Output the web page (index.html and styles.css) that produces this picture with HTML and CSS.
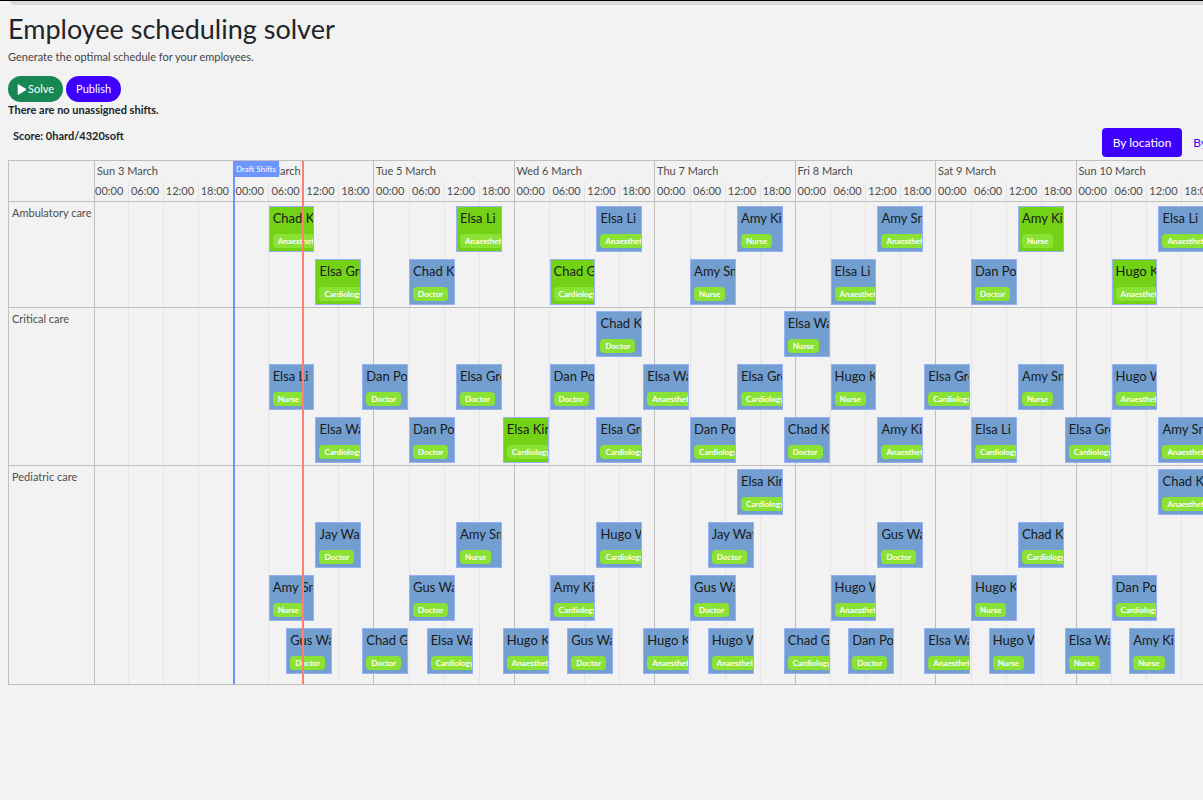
FILE: index.html
```html
<!DOCTYPE html>
<html lang="en">
<head>
<meta charset="utf-8">
<title>Employee scheduling solver</title>
<link rel="stylesheet" href="styles.css">
</head>
<body>
<div class="topbar"><div class="topbar-inner"></div></div>
<main class="page">
  <h1 class="title">Employee scheduling solver</h1>
  <p class="lead">Generate the optimal schedule for your employees.</p>
  <div class="actions">
    <button type="button" class="pill pill-solve"><svg class="play" viewBox="0 0 10 12" aria-hidden="true"><path d="M0.3 1.2Q0.3 0 1.4 0.6L9.2 5.2Q10 6 9.2 6.7L1.4 11.4Q0.3 12 0.3 10.8Z" fill="#fff"/></svg>Solve</button>
    <button type="button" class="pill pill-publish">Publish</button>
  </div>
  <p class="unassigned">There are no unassigned shifts.</p>
  <div class="toolbar">
    <span class="score">Score: 0hard/4320soft</span>
    <div class="tabs">
      <button type="button" class="tab tab-active">By location</button>
      <button type="button" class="tab">By employee</button>
    </div>
  </div>
  <section class="timeline" id="timeline">
    <div class="axis"><div class="days" id="days"></div></div>
    <div class="corner"></div>
  </section>
</main>
<script src="timeline.js"></script>
</body>
</html>
```
FILE: styles.css
```css
* { box-sizing: border-box; }

body {
  margin: 0;
  overflow-x: hidden;
  background: #f2f2f2;
  color: #212529;
  font: 11px/16px Lato, "Noto Sans", sans-serif;
}

button { font: inherit; border: 0; cursor: pointer; }

.topbar { border-top: 1px solid #000; }
.topbar-inner {
  height: 4px;
  margin-left: 10px;
  background: #dcd8dc;
  border-bottom-left-radius: 6px;
}

.page { margin: 0 -69px 0 8px; }

.title {
  margin: 8px 0 0;
  font-size: 27px;
  line-height: 32px;
  font-weight: 400;
}
.lead { margin: 4px 0 11px; color: #414549; }

.actions { display: flex; gap: 3px; }
.pill {
  display: flex;
  align-items: center;
  height: 26px;
  padding: 0 9px;
  border-radius: 13px;
  color: #fff;
}
.pill-solve { background: #198754; gap: 1px; }
.pill-publish { background: #3e00ff; padding: 0 10px; }
.play { width: 10px; height: 11px; }

.unassigned { margin: 0; font-weight: 700; }

.toolbar {
  display: flex;
  justify-content: space-between;
  align-items: flex-start;
  margin-top: 10px;
}
.score { padding-left: 5px; font-weight: 700; }
.tabs { display: flex; }
.tab {
  height: 29px;
  padding: 0 11px;
  border-radius: 4px;
  background: none;
  color: #3e00ff;
  font-size: 12px;
}
.tab-active { background: #3e00ff; color: #fff; }

.timeline {
  position: relative;
  display: grid;
  grid-template-columns: 86px 1fr;
  margin-top: 3px;
  border: 1px solid #bfbfbf;
  color: #4d4d4d;
}

.corner {
  grid-area: 1 / 1;
  height: 41px;
  border-right: 1px solid #bfbfbf;
  border-bottom: 1px solid #bfbfbf;
}
.axis {
  grid-area: 1 / 2 / span 4 / 3;
  overflow: hidden;
}
.days {
  display: grid;
  grid-template-columns: repeat(10, 1fr);
  width: 1405px;
  height: 100%;
  margin-left: -3px;
}
.day {
  display: flex;
  flex-direction: column;
  border-left: 1px solid #bfbfbf;
}
.day-name { height: 20px; padding: 2px 0 0 2px; }
.day:first-child .day-name { padding-left: 4px; }
.quarters {
  flex: 1;
  display: grid;
  grid-template-columns: repeat(4, 1fr);
}
.quarter {
  border-left: 1px solid #e5e5e5;
  padding: 2px 0 0 2px;
}
.quarter:first-child { border-color: transparent; padding-left: 1px; }

.axis-line { grid-area: 1 / 2; border-bottom: 1px solid #bfbfbf; }

.group-label {
  grid-column: 1;
  padding: 3px 0 0 3px;
  border-right: 1px solid #bfbfbf;
  border-bottom: 1px solid #bfbfbf;
  white-space: nowrap;
}
.group {
  grid-column: 2;
  overflow: hidden;
  padding: 3px 0 2px;
  border-bottom: 1px solid #bfbfbf;
}
.group-first { padding-top: 4px; }
.group-last { padding-bottom: 10px; }
.group-last, .group-label-last { border-bottom: 0; }

.lanes {
  display: grid;
  grid-template-columns: repeat(240, 1fr);
  grid-auto-rows: 46px;
  row-gap: 7px;
  width: 1405px;
  margin-left: -2px;
}
.shift {
  display: flex;
  flex-direction: column;
  align-items: flex-start;
  gap: 7px;
  min-width: 0;
  margin-right: 1px;
  padding: 2px 3px;
  overflow: hidden;
  white-space: nowrap;
  border: 1px solid #97b0f8;
  background: #729fcf;
  color: #1a1a1a;
}
.shift-pinned { background: #73d216; }
.shift-name { font-size: 13px; line-height: 18px; }
.skill {
  padding: 0 5px;
  border-radius: 4px;
  background: #8ae234;
  color: #fff;
  font-size: 8px;
  line-height: 14px;
  font-weight: 700;
}

.marker {
  position: absolute;
  top: 0;
  bottom: 0;
  width: 2px;
  background: #6e94ff;
}
.marker-now { background: #ff7f6e; }
.marker-label {
  width: max-content;
  padding: 0 3px;
  background: #6e94ff;
  color: #fff;
  font-size: 8px;
  line-height: 16px;
}
```
FILE: timeline.js
```js
const DAY_WIDTH = 140.5;
const AXIS_START = 83;
const dayNames = ["Sun 3", "Mon 4", "Tue 5", "Wed 6", "Thu 7", "Fri 8", "Sat 9", "Sun 10", "Mon 11", "Tue 12"];
const AN = "Anaesthetics", CA = "Cardiology", DR = "Doctor", NU = "Nurse";

// Each shift: [start hour since 3 March 00:00, employee, skill, pinned]
const groups = [
  { name: "Ambulatory care", lanes: [
    [[30, "Chad King", AN, 1], [62, "Elsa Li", AN, 1], [86, "Elsa Li", AN], [110, "Amy King", NU], [134, "Amy Smith", AN], [158, "Amy King", NU, 1], [182, "Elsa Li", AN]],
    [[38, "Elsa Green", CA, 1], [54, "Chad King", DR], [78, "Chad Green", CA, 1], [102, "Amy Smith", NU], [126, "Elsa Li", AN], [150, "Dan Poe", DR], [174, "Hugo King", AN, 1]]
  ]},
  { name: "Critical care", lanes: [
    [[86, "Chad King", DR], [118, "Elsa Watt", NU]],
    [[30, "Elsa Li", NU], [46, "Dan Poe", DR], [62, "Elsa Green", DR], [78, "Dan Poe", DR], [94, "Elsa Watt", AN], [110, "Elsa Green", CA], [126, "Hugo King", NU], [142, "Elsa Green", CA], [158, "Amy Smith", NU], [174, "Hugo Watt", AN]],
    [[38, "Elsa Watt", CA], [54, "Dan Poe", DR], [70, "Elsa King", CA, 1], [86, "Elsa Green", CA], [102, "Dan Poe", CA], [118, "Chad King", DR], [134, "Amy King", AN], [150, "Elsa Li", CA], [166, "Elsa Green", CA], [182, "Amy Smith", AN]]
  ]},
  { name: "Pediatric care", lanes: [
    [[110, "Elsa King", CA], [182, "Chad King", AN]],
    [[38, "Jay Watt", DR], [62, "Amy Smith", NU], [86, "Hugo Watt", CA], [105, "Jay Watt", DR], [134, "Gus Watt", DR], [158, "Chad King", CA]],
    [[30, "Amy Smith", NU], [54, "Gus Watt", DR], [78, "Amy King", CA], [102, "Gus Watt", DR], [126, "Hugo Watt", AN], [150, "Hugo King", NU], [174, "Dan Poe", CA]],
    [[33, "Gus Watt", DR], [46, "Chad Green", DR], [57, "Elsa Watt", CA], [70, "Hugo King", AN], [81, "Gus Watt", DR], [94, "Hugo King", AN], [105, "Hugo Watt", AN], [118, "Chad Green", CA], [129, "Dan Poe", DR], [142, "Elsa Watt", AN], [153, "Hugo Watt", NU], [166, "Elsa Watt", NU], [177, "Amy King", NU]]
  ]}
];

function add(parent, className, text) {
  const el = document.createElement("div");
  el.className = className;
  if (text) el.textContent = text;
  parent.append(el);
  return el;
}

const timeline = document.getElementById("timeline");
const days = document.getElementById("days");

for (const name of dayNames) {
  const day = add(days, "day");
  add(day, "day-name", name + " March");
  const quarters = add(day, "quarters");
  for (const hour of ["00:00", "06:00", "12:00", "18:00"]) add(quarters, "quarter", hour);
}
add(timeline, "axis-line");

groups.forEach((group, index) => {
  const first = index === 0, last = index === groups.length - 1;
  const label = add(timeline, "group-label" + (last ? " group-label-last" : ""), group.name);
  label.style.gridRow = index + 2;
  const row = add(timeline, "group" + (first ? " group-first" : "") + (last ? " group-last" : ""));
  row.style.gridRow = index + 2;
  const lanes = add(row, "lanes");
  group.lanes.forEach((lane, laneIndex) => {
    for (const [start, employee, skill, pinned] of lane) {
      const shift = add(lanes, "shift" + (pinned ? " shift-pinned" : ""));
      shift.style.gridArea = `${laneIndex + 1} / ${start + 1} / auto / span 8`;
      add(shift, "shift-name", employee);
      add(shift, "skill", skill);
    }
  });
});

function addMarker(className, hour, text) {
  const marker = add(timeline, className);
  marker.style.left = Math.floor(AXIS_START + hour * DAY_WIDTH / 24) + "px";
  if (text) add(marker, "marker-label", text);
}
addMarker("marker", 24.2, "Draft Shifts");
addMarker("marker marker-now", 36);
```
